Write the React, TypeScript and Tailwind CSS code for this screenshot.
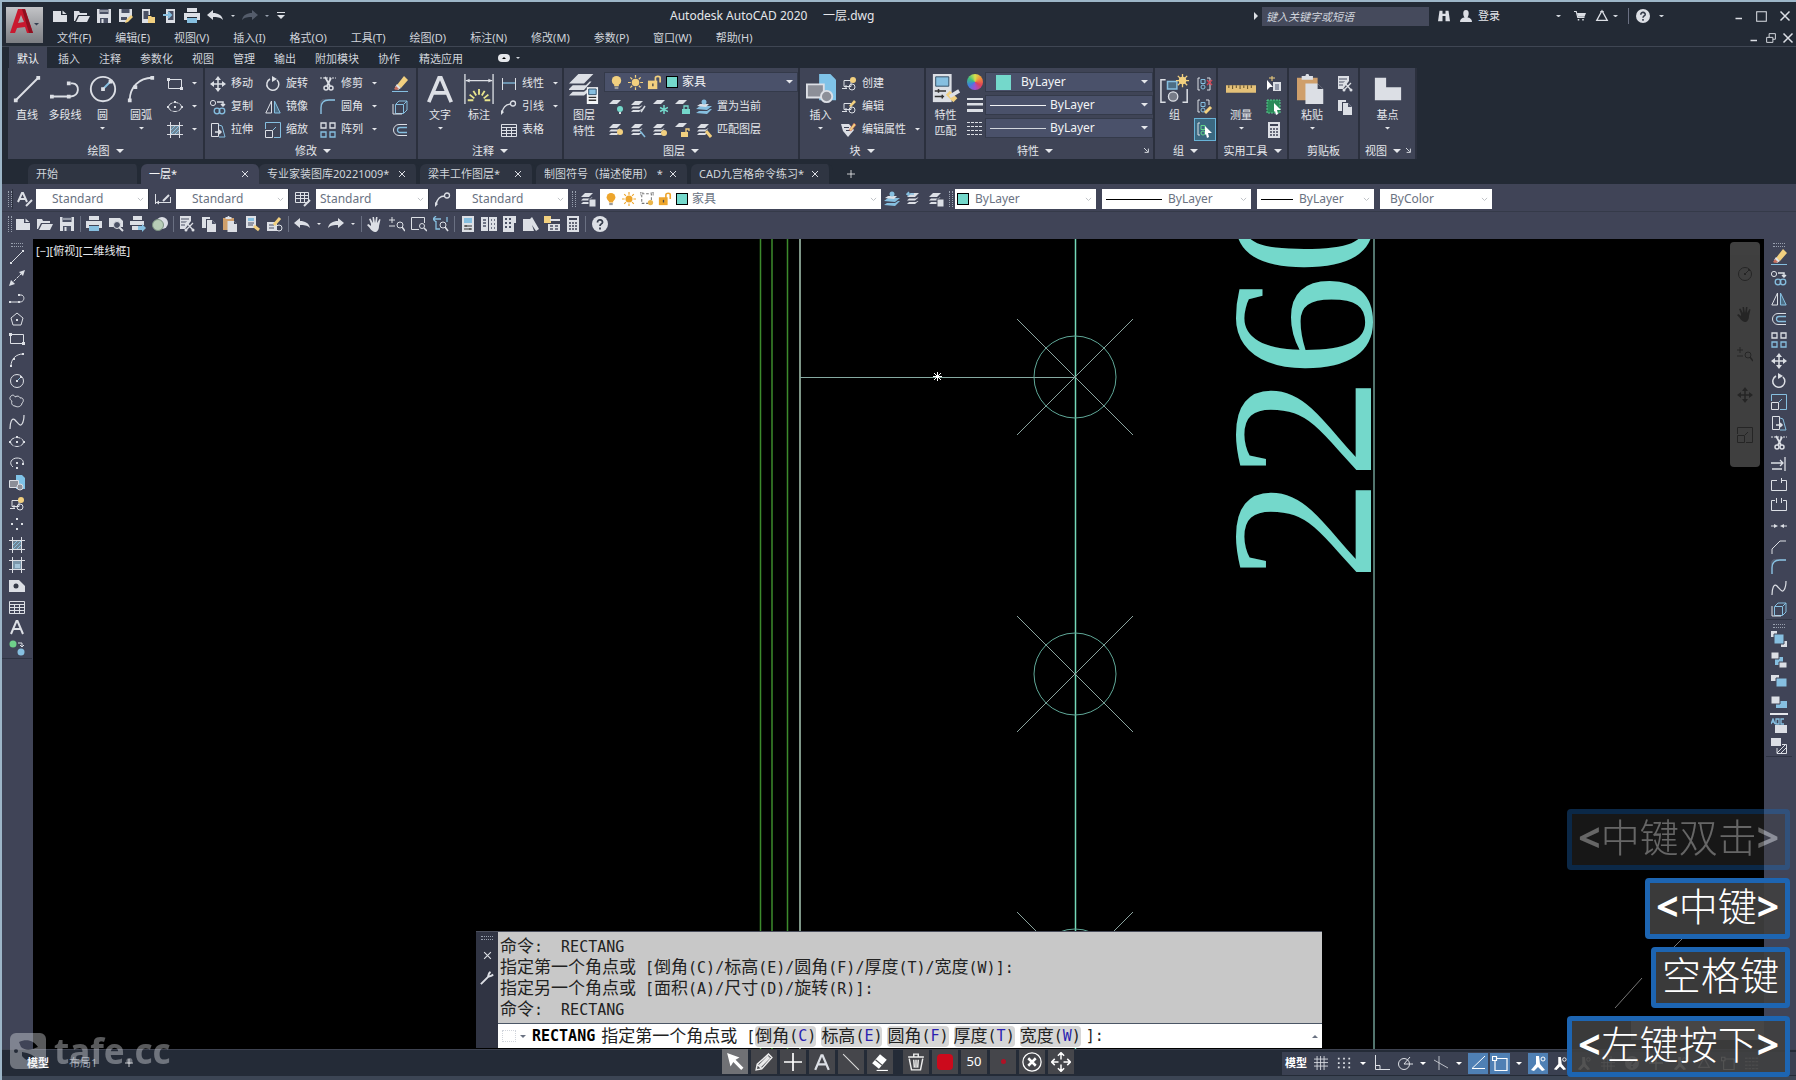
import React from 'react';

type IconProps = { name: string; className?: string };

const W = '#dcdfe5';
const B = '#86bfe0';
const Y = '#f2d07f';
const T = '#74d8cb';

const layers = (
  <g fill={W}>
    <path d="M1 6 5 2h8L9 6z" />
    <path d="M1 9.500 3 7.500h7l1.500-1h1L9 9.500z" />
    <path d="M1 13 3 11h7l1.500-1h1L9 13z" />
  </g>
);

const blocks = (
  <g fill="none" stroke={W}>
    <path d="M3 4.500h7v6H3zM1 12.500h5M5 13V9" />
    <circle cx="11" cy="11" r="3" />
  </g>
);

const glyphs: Record<string, React.ReactNode> = {
  new: <path fill={W} d="M1 3h8v4h6v7H1zM10.500 2.500 14.500 6h-4z" />,
  open: <path fill={W} d="M0 3h5l1 2h7v2H4l-3 6H0zM5 8h11l-3 6H2z" />,
  save: <><path fill={W} d="M1 1h14v14H1z" /><path fill="#4b5165" d="M3.500 1h9v5h-9zM4 10h8v5H4z" /><path fill={W} d="M4 2.500h8v1H4zM5.500 11h2v4h-2z" /></>,
  saveas: <><path fill={W} d="M1 1h13v7l-6 6H1z" /><path fill="#4b5165" d="M3.500 1h8v4h-8zM3 9h6v3H3z" /><path fill={Y} d="m8 12 5-5 2 2-5 5-3 1z" /></>,
  mobileopen: <><path fill={W} d="M2 1h8v6H8v8H2z" /><path fill="#4b5165" d="M3.500 3h5v8h-5z" /><path fill={Y} d="M8 8h3l1 1h3v6H8z" /></>,
  mobilesave: <><path fill={W} d="M4 1h9v14H4z" /><path fill="#4b5165" d="M6 3h5.500v9H6z" /><path stroke={B} strokeWidth="2" d="M1 7h7M6 4l3 3-3 3" fill="none" /></>,
  print: <><path fill={W} d="M3 0h10v4H3zM0 5h16v7h-3V9H3v3H0z" /><path fill={B} d="M3 10h10v5H3z" /></>,
  preview: <><path fill={W} d="M1 2h11l3 3v6H1z" /><circle cx="9" cy="9" r="3.500" fill="#4b5165" stroke={W} /><path stroke={W} strokeWidth="2" d="m11 11 4 4" /></>,
  publish: <><path fill={W} d="M3 0h9v4H3zM0 5h14v4H0zM2 10h6v4H2z" /><path fill={B} d="M8 10h4V8l4 4-4 4v-2H8z" /></>,
  globe: <><circle cx="10" cy="7" r="6" fill={W} /><circle cx="6" cy="9" r="5.500" fill="#b7cdb6" stroke="#7e9484" /></>,
  undo: <path fill={W} d="m0 7 6-5v3c5 0 9 2 10 7-3-3-6-3-10-3v3z" />,
  redo: <path fill={W} d="m16 7-6-5v3C5 5 1 7 0 12c3-3 6-3 10-3v3z" />,
  redodim: <path fill="#545c6b" d="m16 7-6-5v3C5 5 1 7 0 12c3-3 6-3 10-3v3z" />,
  line: <><path stroke={W} d="M2 14 14 2" /><path fill={W} d="M1 13h2v2H1zM13 1h2v2h-2z" /></>,
  xline: <><path stroke={W} d="M2 14 14 2" strokeDasharray="3 1" /><path fill={W} d="m0 16 2-6 4 4zM16 0l-2 6-4-4z" /></>,
  pline: <><path fill="none" stroke={W} d="M1 12h10c5 0 5-7 1-7h-1" /><path fill={W} d="M0 11h2v2H0zM9 11h2v2H9zM9 4h2v2H9z" /></>,
  circle: <><circle cx="8" cy="8" r="6.500" fill="none" stroke={W} /><path stroke={B} d="m8 8 4-4" /><path fill={W} d="M7 7h2v2H7zM11 3h2v2h-2z" /></>,
  arc: <><path fill="none" stroke={W} d="M2 14C2 7 7 2 14 2" /><path fill={W} d="M1 13h2v2H1zM13 1h2v2h-2zM4 6h2v2H4z" /></>,
  rect: <><path fill="none" stroke={W} d="M1.500 3.500h13v9h-13z" /><path fill={W} d="M0 2h3v3H0zM13 11h3v3h-3z" /></>,
  ellipse: <><ellipse cx="8" cy="8" rx="6.500" ry="4.500" fill="none" stroke={W} strokeDasharray="5 1" /><path fill={W} d="M7 7h2v2H7zM0 7h2v2H0zM14 7h2v2h-2zM7 2h2v2H7z" /></>,
  elarc: <><path fill="none" stroke={W} d="M4 12C-1 8 3 3 8 3s7 3 6 6" /><path fill={W} d="M7 7h2v2H7zM7 12h2v2H7zM13 8h2v2h-2z" /></>,
  hatch: <><path fill="#6f8494" d="M4 4h8v8H4z" /><path stroke={W} fill="none" d="M0 3.500h16M0 12.500h16M3.500 0v16M12.500 0v16" /><path stroke={B} d="m4 8 4-4M4 12l8-8M8 12l4-4" /></>,
  gradient: <><path fill="#7d98ab" d="M4 4h8v8H4z" /><path fill="#a4c4d8" d="M6 7h5v4H6z" /><path stroke={W} fill="none" d="M0 3.500h16M0 12.500h16M3.500 0v16M12.500 0v16" /></>,
  polygon: <><path fill="none" stroke={W} d="m8 2 6 5-2 7H4L2 7z" /><path fill={W} d="M7 8h2v2H7z" /></>,
  cloud: <path fill="none" stroke={W} d="M2 3c2-2 4 0 4 1 3-2 5 0 5 1 4-1 4 4 2 5 0 3-4 5-7 3-3 0-4-3-3-5-2-1-3-3-1-5z" />,
  spline: <path fill="none" stroke={W} strokeWidth="1.200" d="M1 15C1 8 3 3 6 6s5 7 7 4 2-6 2-9" />,
  point: <path fill={W} d="M7 2h2v2H7zM2 7h2v2H2zM12 7h2v2h-2zM7 12h2v2H7z" />,
  region: <><path fill={W} d="M0 2h10l6 6v6H0z" /><circle cx="7" cy="8" r="2.500" fill="#343a48" /></>,
  table: <path fill="none" stroke={W} d="M.5 2.500h15v12H.5zM0 5.500h16M0 8.500h16M0 11.500h16M5.500 5v9M10.500 5v9" />,
  letter: <path fill="none" stroke={W} strokeWidth="2" d="M2 15 7.500 2h1L14 15M4.500 10h7" />,
  swap: <><circle cx="4" cy="4" r="3.500" fill="#6fd08a" /><circle cx="12" cy="12" r="3.500" fill={B} /><path fill="none" stroke={W} d="M9 3h4v4M11 5l2 2 2-2" /></>,
  insert: <><path fill="#7fc3e8" d="M7 0h6l3 3v11H7z" /><path fill="#8c8f98" stroke={W} d="M.5 5.500h9v7h-9z" /><circle cx="11" cy="12" r="3" fill="#8c8f98" stroke={W} /></>,
  block: <>{blocks}<circle cx="12" cy="4" r="3" fill={Y} /></>,
  blockedit: <>{blocks}<path fill={Y} d="m8 7 5-6 2 2-5 5z" /></>,
  attr: <><path fill={W} d="M0 2h8l5 6-6 7-5-6z" /><path fill="#3e4355" d="M3 5h5v1H3zM5 8h4v1H5z" /><path fill={Y} stroke="#c8534a" strokeWidth=".5" d="m8 8 5-7 2 2-5 6z" /></>,
  move: <><path stroke={W} strokeWidth="1.500" d="M8 2v12M2 8h12" /><path fill={W} d="m8 0 3 4H5zM8 16l3-4H5zM0 8l4-3v6zM16 8l-4-3v6z" /></>,
  rotate: <><path fill="none" stroke={W} strokeWidth="1.500" d="M5 3a6 6 0 1 0 7 1" /><path fill={W} d="m7 0 5 3-5 3z" /></>,
  trim: <><path stroke={W} strokeDasharray="2 1" d="M0 2h16" /><path fill="none" stroke={W} strokeWidth="1.800" d="m5 1 5 9M11 2l-4 8" /><circle cx="6" cy="12" r="2" fill="none" stroke={W} strokeWidth="1.500" /><circle cx="11" cy="12" r="2" fill="none" stroke={W} strokeWidth="1.500" /></>,
  erase: <><path fill={Y} d="M5 9 12 0l4 4-7 8z" /><path fill="#e4e4e4" d="m3 11 2-3 4 4-3 2z" /><path fill="#c9705e" d="m2 13 2-3 3 3-3 1z" /><path stroke={B} d="M0 15.500h16" /></>,
  copy: <><g fill="none" stroke={B} strokeWidth="1.300"><circle cx="7" cy="12" r="2.800" /><circle cx="12" cy="12" r="2.800" /></g><circle cx="3" cy="4" r="2.600" fill="none" stroke={W} /><path fill="none" stroke={W} strokeWidth="1.500" d="M7 3h6v4M11 5l2 2 2-2" /></>,
  mirror: <><path fill="none" stroke={W} d="M6.500 2v12H.8z" /><path fill="#4c6d84" stroke={B} d="M9.500 2v12h5.700z" /></>,
  fillet: <><path fill="none" stroke="#6b7488" d="M1 15V3c0-1 1-2 2-2h12" /><path fill="none" stroke={B} strokeWidth="1.300" d="M1 15V9c0-5 3-8 8-8h6" /></>,
  chamfer: <path fill="none" stroke={W} d="M1 15v-5l8-8h6" />,
  explode: <><path fill="none" stroke={B} d="M3.500 5.500h8v9h-8zM4 5l3-3h8l-3 3M15 2v9l-3 3" /><path fill="none" stroke={W} d="M1 5v10h9" /></>,
  stretch: <><path fill="none" stroke={W} d="M1.500 1.500h7v13h-7z" /><path fill="none" stroke={B} d="m9 3 3 1 3 11H9" /><path stroke={W} strokeWidth="1.500" d="M5 10h6M9 8l2 2-2 2" fill="none" /></>,
  scale: <><path fill="none" stroke={W} d="M.5 8.500h7v7h-7z" /><path fill="none" stroke={B} d="M.5 7V.5h15v15H9M8 8l3-3" /></>,
  array: <g fill="none" strokeWidth="1.300"><path stroke={W} d="M1 1h5v5H1zM10 1h5v5h-5z" /><path stroke={B} d="M1 10h5v5H1zM10 10h5v5h-5z" /></g>,
  offset: <><path fill="none" stroke={W} d="M15 2.500H7a5.500 5.500 0 0 0 0 11h8" /><path fill="none" stroke={B} strokeWidth="1.300" d="M15 5.500H8a2.500 2.500 0 0 0 0 5h7" /></>,
  extend: <path fill="none" stroke={W} strokeWidth="1.300" d="M14 1v14M0 7h4M3 7h9M9 4l3 3-3 3M1 13h10" />,
  breakat: <path fill="none" stroke={W} d="M6 3.500H.5v10h15v-10H11M10.500 1v5" />,
  breakoff: <path fill="none" stroke={W} d="M4 3.500H.5v10h15v-10H12M5.500 1v5M10.500 1v5" />,
  join: <path fill={W} d="M0 7.500h3V6l4 2-4 2V8.500H0zM16 7.500h-3V6L9 8l4 2V8.500h3z" />,
  dim: <><path stroke={W} fill="none" d="M.5 1v14M15.500 1v14M1 4.500h14" /><path fill={W} d="m1 4.500 3-2v4zM15 4.500l-3-2v4z" /></>,
  linear: <><path stroke={W} d="M1.500 2v12M14.500 2v12" /><path stroke={B} strokeWidth="1.300" d="M2 7h12" /></>,
  dimbig: <><path stroke={W} fill="none" d="M.5 0v16M15.500 0v16M1 3.500h14" strokeWidth=".7" /><path fill={W} d="m1 3.500 2-1v2zM15 3.500l-2-1v2z" /><path stroke="#e8e48c" strokeWidth="1" d="M8 8v3M5 9l1.500 2.500M11 9 9.500 11.500M3 11l2.500 2M13 11l-2.500 2M2 14h3M14 14h-3" /></>,
  leader: <><path fill="none" stroke={W} strokeWidth="1.300" d="M1 14C2 7 5 5 10 5" /><circle cx="12" cy="4.500" r="2.500" fill="none" stroke={W} strokeWidth="1.300" /><path fill={W} d="m0 16 0-5 3 2z" /></>,
  layerprops: <><g fill={W}><path d="M0 5 5 0h8L8 5zM0 8l2-2h7l2-2h1L8 8.500H0zM0 11.500l2-2h6l3-2.500v2L8 11.500z" /></g><path fill="#f2f4f6" d="M9.500 7h6v9h-6z" /><path fill={B} stroke="#31506a" strokeWidth=".5" d="M10.500 8h4v3h-4z" /><path stroke="#333" strokeWidth=".7" d="M10.500 12.500h4M10.500 14h4" /></>,
  laybulb: <><path fill={W} d="M1 5 5 1h8L9 5z" /><circle cx="12" cy="10" r="3" fill={T} /><path fill={W} d="M11 13h2v2h-2z" /></>,
  laymake: <>{layers}<path stroke={W} strokeWidth="1.500" d="m15 7-4 6" /></>,
  layfreeze: <><path fill={W} d="M1 5 5 1h8L9 5z" /><path stroke={T} strokeWidth="1.500" d="M12 6v9M8 8.500l8 4M8 12.500l8-4" /></>,
  laylock: <><path fill={W} d="M1 5 5 1h8L9 5z" /><path fill={T} d="M8 10h8v5H8z" /><path fill="none" stroke={T} strokeWidth="1.300" d="M10 10V7h4v3" /></>,
  laycur: <><path fill={B} d="m0 10 4-3h12l-5 4zM0 14l3-2h8l3-2h2l-5 5z" /><path fill={W} d="m1 7 3-2h9l-3 3z" /><circle cx="8" cy="3" r="2.500" fill={B} /></>,
  laybulby: <>{layers}<circle cx="12" cy="10" r="3" fill={Y} /></>,
  laywalk: <>{layers}<path stroke={B} strokeWidth="1.500" d="m10 9 5 6" /></>,
  laysun: <>{layers}<circle cx="12" cy="11" r="3" fill={Y} /></>,
  layunlock: <><path fill={W} d="M1 5 5 1h8L9 5z" /><path fill={Y} d="M7 10h7v5H7z" /><path fill="none" stroke={Y} strokeWidth="1.300" d="M12 10V7h3v2" /></>,
  laymatch: <>{layers}<path stroke={Y} strokeWidth="3" d="m10 9 5 6" /></>,
  layprev: <>{layers}<path stroke={B} strokeWidth="1.500" fill="none" d="M8 3H1l2-2M1 3l2 2" /></>,
  laystate: <>{layers}<path fill={W} stroke="#404457" d="M9 8h7v8H9z" /></>,
  bulb: <><circle cx="8" cy="6" r="5" fill="currentColor" /><path fill="currentColor" d="M5.500 10h5v2h-5z" /><path fill="#9a9a9a" d="M6 12.500h4V15H6z" /></>,
  sun: <><circle cx="8" cy="8" r="4" fill="currentColor" /><path stroke="currentColor" strokeWidth="1.300" d="M8 0v3M8 13v3M0 8h3M13 8h3M2.500 2.500l2 2M11.500 11.500l2 2M13.500 2.500l-2 2M2.500 13.500l2-2" /></>,
  unlock: <><path fill="currentColor" d="M1 6h10v9H1z" /><path fill="none" stroke="currentColor" strokeWidth="1.800" d="M9 7V3c0-2 5-2 5 0v5" /><path fill="#4b4b4b" d="M5.500 9h1.500v3H5.500z" /></>,
  vpfreeze: <><path fill="none" stroke="#777" strokeWidth="1.200" strokeDasharray="3 2" d="M2 2h11v11H2z" /><path stroke="#777" d="M0 4V0h4M12 0h3v4" fill="none" /><circle cx="12" cy="12" r="3" fill="#eab54b" /></>,
  match: <><path fill={W} d="M1 0h10v15H1z" /><path fill={B} stroke="#2f4a60" strokeWidth=".5" d="M2.500 1.500h7v5h-7z" /><path stroke="#333" strokeWidth=".8" d="M2 9h6M2 12h5M4 8v2M6 11v2" /><path stroke={Y} strokeWidth="3" d="m9 10 4 4" /><path stroke={W} strokeWidth="2" d="m10 12 5-3" /></>,
  lineweight: <path fill={W} d="M0 1h16v2H0zM0 6h16v2.500H0zM0 12h16v3H0z" />,
  linetype: <path stroke={W} strokeDasharray="3 1" d="M0 2.500h16M0 6.500h16M0 10.500h16M0 14.500h16" />,
  group: <><path fill="none" stroke={W} d="M3 3H.5v12H3M12 15h2.500V8" strokeWidth=".8" /><path fill="#4c6d84" stroke={B} strokeWidth=".8" d="M4 4h5v4H4z" /><circle cx="7" cy="12" r="2.500" fill="#777c88" stroke={W} strokeWidth=".7" /><circle cx="12" cy="3.500" r="2" fill={Y} /><path stroke={Y} d="M12 0v7M8.500 3.500h7M9.500 1l5 5M14.500 1l-5 5" strokeWidth=".7" /></>,
  ungroup: <><path fill="none" stroke={W} d="M3 2H1v12h2M10 2h3v12h-3" /><path fill="none" stroke={B} d="M4 3.500h4v4H4z" /><circle cx="6" cy="11" r="2" fill="none" stroke={B} /><path stroke="#cf4455" strokeWidth="1.500" d="m10 4 5 5M15 4l-5 5" /></>,
  groupedit: <><path fill="none" stroke={W} d="M3 1H1v12h2M9 1h3v5" /><path fill="none" stroke={B} d="M4 3.500h4v4H4z" /><circle cx="6" cy="11" r="2" fill="none" stroke={B} /><path stroke={Y} strokeWidth="3" d="m8 14 6-6" /></>,
  groupsel: <><path fill="none" stroke={W} d="M3 1H1v12h2" /><path fill="none" stroke="#62d58a" d="M4 3.500h4v4H4z" /><circle cx="6" cy="11" r="2" fill="none" stroke="#62d58a" /><path fill="#fff" d="m8 4 7 7h-4l1 4-2 1-1-4-1 1z" /></>,
  ruler: <><path fill="#e4c178" d="M0 6h16v4H0z" /><path stroke="#6d5a32" strokeWidth=".6" d="M1.500 6v1.500M3.500 6v2M5.500 6v1.500M7.500 6v2M9.500 6v1.500M11.500 6v2M13.500 6v1.500" /></>,
  quick: <><path fill="#fff" d="m1 4 6 7H4l-3 3z" /><path fill={W} d="M7 6h8v9H7z" /><path stroke="#47506a" d="M9 9h4M9 11h4M9 13h4" /><path stroke={Y} d="M6 0v5M3 2h6" /></>,
  selsim: <><path fill="#2b8a59" stroke="#59c98d" strokeDasharray="2 1" d="M1 1h13v13H1z" /><path fill="#fff" d="m8 4 7 7h-4l1 4-2 1-1-4-1 1z" /></>,
  calc: <><path fill={W} d="M2 0h12v16H2z" /><path fill="#3e4355" d="M4 2h8v2H4z" /><path stroke="#3e4355" strokeWidth="1.500" strokeDasharray="2 1" d="M4 7h8M4 10h8M4 13h8" /></>,
  paste: <><path fill="#cf9f6b" d="M0 2h11v12H0z" /><path fill={W} d="M2.500 1h2c0-1.500 2-1.500 2 0h2v2h-6zM4.500 5H11l3 3v8H4.500z" /><path fill="#3e4355" d="M11 5v3h3z" /></>,
  cut: <><path fill={W} d="M1 0h11v5L6 13H1z" /><path stroke="#4b5165" d="M2 3h8M2 6h6M2 9h4" /><path stroke={W} strokeWidth="1.300" d="m7 6 7 8M14 7l-7 7" /><circle cx="7" cy="14" r="1.500" fill={W} /><circle cx="14" cy="14" r="1.500" fill={W} /></>,
  copyclip: <><path fill={W} d="M1 1h8v2H5v9H1z" /><path fill={W} d="M6 4h5l4 4v8H6z" /><path fill="#4b5165" d="M11 4v4h4z" /></>,
  base: <path fill={W} d="M1 2h6v5h8v7H1z" />,
  pan: <path fill={W} d="M4 8 2 3l1.500-.5L6 7l-.5-6H7l1 6 1-6h1.500L10 7l2.500-4 1 .5L12 10c0 4-2 6-4 6-3 0-5-4-8-7l1.500-1L4 10z" />,
  zoomrt: <><path stroke={W} d="M0 4h6M3 1v6M0 10h6" /><circle cx="11" cy="9" r="3" fill="none" stroke={W} /><path stroke={W} strokeWidth="1.500" d="m13 11 3 4" /></>,
  zoomwin: <><path fill="none" stroke={W} d="M8 13.500H.5v-12h13V7" /><circle cx="11" cy="10" r="2.500" fill="none" stroke={W} /><path stroke={W} strokeWidth="1.500" d="m13 12 3 3" /></>,
  zoomprev: <><path fill="none" stroke={B} d="M3 5v8h4M14 1v5M0 3h8M3 0 0 3l3 3" strokeWidth="1.300" /><circle cx="10" cy="9" r="3" fill="none" stroke={W} /><path stroke={W} strokeWidth="1.500" d="m12 11 3 4" /></>,
  props: <><path fill={W} d="M2 0h12v16H2z" /><path fill={B} d="M4 2h8v5H4z" /><path stroke="#333" d="M4 10h8M4 13h8M6 9v2M10 12v2" /></>,
  dcenter: <><path fill={W} d="M0 1h7v14H0zM8 1h8v14H8z" /><path stroke="#4b5165" d="M2 4h3M2 7h3M2 10h3M10 4h1M13 4h1M10 8h1M13 8h1M10 12h1M13 12h1" strokeWidth="1.500" /></>,
  palette: <><path fill={W} d="M1 0h13v7h-2v9H1z" /><path stroke="#4b5165" strokeWidth="2" strokeDasharray="2 2" d="M3 3h7M3 7h7M3 11h7" /></>,
  sheet: <path fill={W} d="M0 3h7l2-2 7 12-3 2-4-6 2 6H0z" />,
  markup: <><path fill={Y} d="M0 0h7v7H0z" /><path fill={W} d="M6 3h10v2H6zM4 8h12v7H4z" /><path stroke="#4b5165" d="M6 10h3M11 10h3M6 13h3M11 13h3" strokeWidth="1.500" /></>,
  blocked: <><path fill={W} d="M0 6h10v9H0z" /><path stroke="#4b5165" d="M2 9h5M2 12h5" /><path stroke={Y} strokeWidth="3" d="m7 9 6-7" /><circle cx="12" cy="12" r="3" fill="none" stroke={W} /></>,
  brush: <><path fill={W} d="M1 0h10v12H1z" /><path fill={B} d="M3 2h6v3H3z" /><path stroke="#4b5165" d="M3 7h6M3 9h5" /><path stroke={Y} strokeWidth="3" d="m9 10 5 4" /></>,
  help: <><circle cx="8" cy="8" r="8" fill={W} /><path fill="none" stroke="#343b4a" strokeWidth="1.800" d="M5.500 6.500c0-4 5.500-3 5 0-.5 1.500-2.500 1.500-2.500 3.500M8 11.500v2" /></>,
  astyle: <><path fill="none" stroke={W} strokeWidth="2" d="M1 11 5 2h1l4 9M3 8h5" /><path stroke={W} strokeWidth="2" d="m9 15 6-6" /></>,
  dstyle: <><path stroke={W} d="M.5 3v10M15.500 6v6M1 11.500h14" fill="none" /><path fill={W} d="m1 11.500 3-2v4z" /><path stroke={W} strokeWidth="2" d="m8 10 6-6" /></>,
  tstyle: <><path fill="none" stroke={W} d="M.5 1.500h13v10H.5zM0 4.500h14M0 7.500h14M5.500 2v9M9.500 2v9" /><path stroke={W} strokeWidth="2" d="m9 15 6-6" /></>,
  draw1: <><path fill={W} d="M0 0h6v6H0zM10 10h6v6h-6z" /><path fill={B} stroke="#404457" d="M3 3h10v10H3z" /></>,
  draw2: <><path fill={B} d="M4 5h8v8H4z" /><path fill={W} stroke="#404457" d="M0 0h8v7H0zM8 10h8v6H8z" /></>,
  draw3: <><path fill={W} d="M0 2h8v6H0z" /><path fill={B} stroke="#404457" d="M5 5h11v9H5z" /></>,
  draw4: <><path fill={B} d="M5 7h11v7H5z" /><path fill={W} stroke="#404457" d="M0 2h9v8H0z" /></>,
  draw5: <><path stroke={B} strokeWidth="1.300" fill="none" d="m0 6 2-5 2 5M1 4h2M5 1v5h3V1zM13 1h-3v5h3" /><path fill={W} d="M4 7h12v8H4z" /></>,
  draw6: <><path fill={W} d="M0 0h10v8H0z" /><path fill="none" stroke={W} d="M6 10v5.500h9.500v-9H11M6 15l9-9M10 15l5-5" /></>,
  cart: <><path fill="none" stroke={W} strokeWidth="1.500" d="M0 2h3l2 8h9" /><path fill={W} d="M4 4h12l-2 5H5zM5 12h2v2H5zM11 12h2v2h-2z" /></>,
  tri: <path fill="none" stroke={W} strokeWidth="1.500" d="M8 2 2 13h12zM6 3h4" />,
  user: <path fill={W} d="M8 0c5 0 4 7 2 10 3 0 6 2 6 6H0c0-4 3-6 6-6C4 7 3 0 8 0z" />,
  bino: <path fill={W} d="M2 1h4v4h4V1h4l2 14h-6V8H6v7H0z" />,
  grid: <path stroke={W} d="M0 3.500h16M0 7.500h16M0 11.500h16M3.500 0v16M7.500 0v16M11.500 0v16" />,
  snap: <path stroke={W} strokeWidth="2" strokeDasharray="2 4" d="M1 3h14M1 8h14M1 13h14" />,
  ortho: <path fill="none" stroke={W} d="M1.500 0v14.500H16M2 10.500h4v4" />,
  polar: <><circle cx="7" cy="9" r="5.500" fill="none" stroke={W} /><path stroke={W} d="M7 9h9M7 9l6-7" /></>,
  iso: <path stroke={W} d="M6 1v14M1 5l14 8" fill="none" opacity=".8" />,
  track: <path fill="none" stroke="#fff" d="M15 1 2 13.500h13" />,
  osnap: <path fill="none" stroke="#fff" strokeWidth="1.200" d="M4 3.500h11v12H3V5M.5 1.500h4v4h-4z" />,
  anno: <><path fill="#fff" d="M6 1h3l1 8 5 6-3 1-4-4-4 4-3-1 5-6z" /><circle cx="13" cy="4" r="2" fill="none" stroke="#fff" /></>,
  cursor: <path fill="#fff" d="m1 0 11 4-3.500 2 7 7-2 2-7-7L4 12z" />,
  pencil: <path fill="none" stroke="#eee" strokeWidth="1.300" d="m1 15 1-5L12 1l3 3-9 10zM4 11l8-8M5 12l8-8M2 10l4 4" />,
  plus: <path stroke="#fff" strokeWidth="1.500" d="M8 0v16M0 8h16" />,
  diag: <path stroke="#ddd" d="m1 1 14 14" />,
  rubber: <><path fill="#fff" d="m8 1 6 5-7 8-6-5z" /><path stroke="#fff" d="M5 15.500h10" /><path stroke="#4a4a4c" d="m4 6 6 5" /></>,
  trash: <path fill="none" stroke="#eee" strokeWidth="1.300" d="M1 3.500h14M6 3V1h4v2M2 5l2 10h8l2-10M6 6l.5 7M10 6l-.5 7M8 6v7" />,
  closeo: <><circle cx="8" cy="8" r="7.300" fill="none" stroke="#fff" /><path stroke="#fff" strokeWidth="2" d="m5 5 6 6M11 5l-6 6" /></>,
  mover: <path fill="none" stroke="#fff" strokeWidth="1.200" d="M8 6V1M5.500 3 8 .5 10.500 3M8 10v5M5.500 13 8 15.500l2.500-2.500M6 8H1M3 5.500.5 8 3 10.500M10 8h5M13 5.500 15.500 8 13 10.500" />,
  wrench: <path fill="none" stroke={W} strokeWidth="2.200" d="m1 15 8-8M15 4c-2 2-4 2-6 3 1-2 0-4 3-6" />,
  close: <path stroke={W} strokeWidth="2" d="m2 2 12 12M14 2 2 14" />,
  max: <path fill="none" stroke={W} strokeWidth="1.500" d="M1 1h14v14H1z" />,
  min: <path stroke={W} strokeWidth="3" d="M1 13h13" />,
  restore: <path fill="none" stroke={W} strokeWidth="1.500" d="M1 7h10v8H1zM5 7V1h10v9h-4" />,
};

const Icon = ({ name, className = 'size-4' }: IconProps) => (
  <svg viewBox="0 0 16 16" className={`shrink-0 ${className}`} aria-hidden="true">
    {glyphs[name]}
  </svg>
);

const Caret = ({ className = 'w-[5px] text-gray-200' }: { className?: string }) => (
  <svg viewBox="0 0 8 4" className={`shrink-0 ${className}`} aria-hidden="true">
    <path fill="currentColor" d="M0 0h8L4 4z" />
  </svg>
);

const IconButton = ({ name, className = 'w-[22px] h-5', icon = 'size-4' }: { name: string; className?: string; icon?: string }) => (
  <button aria-label={name} className={`flex shrink-0 items-center justify-center ${className}`}>
    <Icon name={name} className={icon} />
  </button>
);

const Panel = ({ title, className, corner, plain, children }: { title: string; className: string; corner?: boolean; plain?: boolean; children: React.ReactNode }) => (
  <section className={`flex h-[91px] shrink-0 flex-col border-r-2 border-[#2b303d] bg-[#3f4456] ${className}`}>
    <div className="flex h-[75px] pt-1">{children}</div>
    <div className="flex h-4 items-center pb-px">
      <h2 className="flex flex-1 items-center justify-center gap-[6px] text-[11px] leading-4 text-gray-200">
        {title}
        {!plain && <Caret className="w-2" />}
      </h2>
      {corner && (
        <svg viewBox="0 0 8 8" className="mr-1 size-[5px]" aria-hidden="true">
          <path fill="none" stroke={W} strokeWidth="1.500" d="m0 0 6 6M7 1v6H1" />
        </svg>
      )}
    </div>
  </section>
);

const BigTool = ({ name, label, className, caret, icon = 'size-[30px]' }: { name: string; label: string[]; className: string; caret?: boolean; icon?: string }) => (
  <button className={`flex shrink-0 flex-col items-center justify-start pt-[2px] text-[11px] leading-4 text-gray-200 ${className}`}>
    <Icon name={name} className={icon} />
    <span className="pt-[3px]">{label.map((line) => <span key={line} className="block whitespace-nowrap">{line}</span>)}</span>
    {caret && <Caret className="mt-1 w-[5px]" />}
  </button>
);

const SmallTool = ({ name, label, caret }: { name: string; label?: string; caret?: boolean }) => (
  <button aria-label={label ?? name} className="flex h-[23px] items-center gap-[5px] whitespace-nowrap text-[11px] text-gray-200">
    <Icon name={name} />
    {label}
    {caret && <Caret className="ml-1 w-[5px]" />}
  </button>
);

const Column = ({ className, children }: { className: string; children: React.ReactNode }) => (
  <div className={`flex shrink-0 flex-col ${className}`}>{children}</div>
);

const RibbonCombo = ({ label, value, children }: { label: string; value: string; children: React.ReactNode }) => (
  <label className="flex h-5 w-full items-center gap-1 border border-[#343a4a] bg-[#4a516a] px-1">
    {children}
    <select aria-label={label} className="min-w-0 flex-1 appearance-none bg-transparent text-[12px] leading-4 text-gray-100">
      <option>{value}</option>
    </select>
    <Caret className="w-[7px] text-gray-200" />
  </label>
);

const BarCombo = ({ label, value, className, children }: { label: string; value: string; className: string; children?: React.ReactNode }) => (
  <label className={`flex h-5 shrink-0 items-center gap-1 bg-white pr-1 ${className}`}>
    {children}
    <select aria-label={label} className="min-w-0 flex-1 appearance-none bg-transparent text-[12px] leading-4 text-gray-500">
      <option>{value}</option>
    </select>
    <svg viewBox="0 0 8 5" className="w-[7px]" aria-hidden="true"><path fill="none" stroke="#b8bcc0" d="m1 1 3 3 3-3" /></svg>
  </label>
);

const Grip = () => <span className="h-4 w-1 shrink-0 border-x border-dotted border-gray-400" />;
const HGrip = () => <span className="mx-auto block h-1 w-3 shrink-0 border-y border-dotted border-gray-400" />;
const Divider = () => <span className="mx-[2px] h-4 w-px shrink-0 bg-[#6a7082]" />;

const menus = ['文件(F)', '编辑(E)', '视图(V)', '插入(I)', '格式(O)', '工具(T)', '绘图(D)', '标注(N)', '修改(M)', '参数(P)', '窗口(W)', '帮助(H)'];
const ribbonTabs = ['插入', '注释', '参数化', '视图', '管理', '输出', '附加模块', '协作', '精选应用'];
const files = [
  { name: '开始', width: 'w-[113px]', start: true },
  { name: '一层*', width: 'w-[118px]', active: true },
  { name: '专业家装图库20221009*', width: 'w-[161px]' },
  { name: '梁丰工作图层*', width: 'w-[116px]' },
  { name: '制图符号（描述使用） *', width: 'w-[155px]' },
  { name: 'CAD九宫格命令练习*', width: 'w-[142px]' },
];
const drawTools = ['line', 'xline', 'pline', 'polygon', 'rect', 'arc', 'circle', 'cloud', 'spline', 'ellipse', 'elarc', 'insert', 'block', 'point', 'hatch', 'gradient', 'region', 'table', 'letter', 'swap'];
const modifyTools = ['erase', 'copy', 'mirror', 'offset', 'array', 'move', 'rotate', 'scale', 'stretch', 'trim', 'extend', 'breakat', 'breakoff', 'join', 'chamfer', 'fillet', 'spline', 'explode'];

const TitleBar = () => (
  <header className="flex h-[45px] shrink-0 border-b border-[#3f4653] pl-1">
    <button aria-label="应用程序菜单" className="mt-[5px] flex h-9 w-[37px] shrink-0 items-start bg-linear-to-b from-[#c3c4c7] to-[#7c7e83]">
      <svg viewBox="0 0 24 26" className="ml-1 mt-px h-[26px] w-6" aria-hidden="true">
        <path fill="#c9192f" d="M8 1h7l8 24h-6l-2-6-8 1-2 5H0zM11 7 8 15l6-1z" />
        <path fill="#8f1020" d="m15 1 8 24h-4L12 1z" />
      </svg>
      <Caret className="mt-4 w-[5px] text-gray-700" />
    </button>
    <div className="flex min-w-0 flex-1 flex-col">
      <div className="flex h-[25px] items-center pt-[3px]">
        <div className="flex flex-1 items-center pl-[6px]">
          {['new', 'open', 'save', 'saveas', 'mobileopen', 'mobilesave', 'print'].map((n) => <IconButton key={n} name={n} />)}
          <IconButton name="undo" className="h-5 w-6" />
          <Caret className="mx-1 w-1 text-gray-300" />
          <IconButton name="redodim" />
          <Caret className="mx-1 w-1 text-gray-400" />
          <svg viewBox="0 0 8 8" className="ml-1 size-2" aria-hidden="true"><path fill={W} d="M0 0h8v1H0zM0 3h8L4 7z" /></svg>
        </div>
        <h1 className="w-[560px] whitespace-pre text-[12px] leading-5 text-gray-200">{'Autodesk AutoCAD 2020     一层.dwg'}</h1>
        <div className="flex w-[566px] items-center">
          <svg viewBox="0 0 4 8" className="ml-6 mr-1 h-2 w-1 shrink-0" aria-hidden="true"><path fill={W} d="m0 0 4 4-4 4z" /></svg>
          <input aria-label="搜索" placeholder="键入关键字或短语" className="h-[19px] w-[167px] bg-[#454a5c] px-1 text-[11px] italic placeholder:text-gray-300" />
          <IconButton name="bino" className="ml-1 h-5 w-[22px]" icon="size-3" />
          <IconButton name="user" icon="size-3" />
          <button className="ml-px whitespace-nowrap text-[11px] text-gray-200">登录</button>
          <Caret className="ml-[56px] mr-2 w-[5px] text-gray-300" />
          <IconButton name="cart" icon="size-3" />
          <IconButton name="tri" icon="size-[14px]" />
          <Caret className="mr-2 w-[5px] text-gray-300" />
          <Divider />
          <IconButton name="help" className="h-5 w-6" icon="size-[14px]" />
          <Caret className="ml-1 w-[5px] text-gray-300" />
          <div className="ml-auto flex">
            <IconButton name="min" className="h-5 w-[23px]" icon="size-2" />
            <IconButton name="max" className="h-5 w-[23px]" icon="size-[11px]" />
            <IconButton name="close" className="h-5 w-[23px]" icon="size-3" />
          </div>
        </div>
      </div>
      <nav className="flex h-[19px] items-center pl-[14px] pt-[3px]">
        <div className="flex flex-1 gap-6 text-[11px] leading-4 text-gray-300">
          {menus.map((m) => <button key={m} className="whitespace-nowrap">{m}</button>)}
        </div>
        <div className="flex">
          <IconButton name="min" className="h-4 w-[17px]" icon="size-2" />
          <IconButton name="restore" className="h-4 w-[17px]" icon="size-[10px]" />
          <IconButton name="close" className="h-4 w-[17px]" icon="size-3" />
        </div>
      </nav>
    </div>
  </header>
);

const Ribbon = () => (
  <>
    <nav className="flex h-[21px] shrink-0 items-center gap-[19px] pl-[7px] text-[11px] text-gray-300">
      <button className="-mr-2 h-full bg-[#3f4456] px-2 pt-[3px] text-gray-100">默认</button>
      {ribbonTabs.map((t) => <button key={t} className="pt-[3px]">{t}</button>)}
      <button aria-label="最小化功能区" className="ml-4 flex items-center gap-[6px]">
        <span className="flex h-2 w-3 items-center justify-center rounded-sm bg-gray-200"><svg viewBox="0 0 8 4" className="w-1"><path d="M4 0l4 4H0z" /></svg></span>
        <Caret className="w-1" />
      </button>
    </nav>
    <div className="flex shrink-0 pl-[6px]">
      <Panel title="绘图" className="w-[197px]">
        <BigTool name="line" label={['直线']} className="w-[38px]" />
        <BigTool name="pline" label={['多段线']} className="w-[38px]" />
        <BigTool name="circle" label={['圆']} className="w-[37px]" caret />
        <BigTool name="arc" label={['圆弧']} className="w-10" caret />
        <Column className="pl-[6px]">
          <SmallTool name="rect" caret />
          <SmallTool name="ellipse" caret />
          <SmallTool name="hatch" caret />
        </Column>
      </Panel>
      <Panel title="修改" className="w-[213px] pl-[5px]">
        <Column className="w-[55px]">
          <SmallTool name="move" label="移动" />
          <SmallTool name="copy" label="复制" />
          <SmallTool name="stretch" label="拉伸" />
        </Column>
        <Column className="w-[55px]">
          <SmallTool name="rotate" label="旋转" />
          <SmallTool name="mirror" label="镜像" />
          <SmallTool name="scale" label="缩放" />
        </Column>
        <Column className="w-[72px]">
          <SmallTool name="trim" label="修剪" caret />
          <SmallTool name="fillet" label="圆角" caret />
          <SmallTool name="array" label="阵列" caret />
        </Column>
        <Column className="">
          <SmallTool name="erase" />
          <SmallTool name="explode" />
          <SmallTool name="offset" />
        </Column>
      </Panel>
      <Panel title="注释" className="w-[146px]">
        <BigTool name="letter" label={['文字']} className="w-11" caret />
        <BigTool name="dimbig" label={['标注']} className="w-[34px]" />
        <Column className="pl-[5px]">
          <SmallTool name="linear" label="线性" caret />
          <SmallTool name="leader" label="引线" caret />
          <SmallTool name="table" label="表格" />
        </Column>
      </Panel>
      <Panel title="图层" className="w-[236px]">
        <BigTool name="layerprops" label={['图层', '特性']} className="w-10" />
        <Column className="w-[194px]">
          <RibbonCombo label="图层" value="家具">
            <Icon name="bulb" className="size-[15px] text-[#f2d07f]" />
            <Icon name="sun" className="size-[15px] text-[#f2d07f]" />
            <Icon name="unlock" className="size-[15px] text-[#f2d07f]" />
            <span className="size-3 border border-black bg-[#74d8cb]" />
          </RibbonCombo>
          <div className="mt-[3px] flex h-[23px] items-center pl-[1px]">
            {['laybulb', 'laymake', 'layfreeze', 'laylock'].map((n) => <IconButton key={n} name={n} />)}
            <span className="pl-[3px]"><SmallTool name="laycur" label="置为当前" /></span>
          </div>
          <div className="flex h-[23px] items-center pl-[1px]">
            {['laybulby', 'laywalk', 'laysun', 'layunlock'].map((n) => <IconButton key={n} name={n} />)}
            <span className="pl-[3px]"><SmallTool name="laymatch" label="匹配图层" /></span>
          </div>
        </Column>
      </Panel>
      <Panel title="块" className="w-[126px]">
        <BigTool name="insert" label={['插入']} className="w-[41px]" caret />
        <Column className="">
          <SmallTool name="block" label="创建" />
          <SmallTool name="blockedit" label="编辑" />
          <SmallTool name="attr" label="编辑属性" caret />
        </Column>
      </Panel>
      <Panel title="特性" className="w-[229px]" corner>
        <BigTool name="match" label={['特性', '匹配']} className="w-[39px]" />
        <Column className="w-5 items-center gap-[7px] pt-[2px]">
          <span className="size-4 rounded-full bg-[conic-gradient(#d9e04a,#f08b3c,#e0405a,#a04fd0,#3f7fe0,#3fc080,#d9e04a)]" />
          <Icon name="lineweight" />
          <Icon name="linetype" />
        </Column>
        <Column className="w-[168px] gap-[3px]">
          <RibbonCombo label="颜色" value="ByLayer"><span className="ml-[6px] mr-[6px] size-[15px] bg-[#74d8cb]" /></RibbonCombo>
          <RibbonCombo label="线宽" value="ByLayer"><span className="h-px w-[56px] bg-gray-100" /></RibbonCombo>
          <RibbonCombo label="线型" value="ByLayer"><span className="h-px w-[56px] bg-gray-300" /></RibbonCombo>
        </Column>
      </Panel>
      <Panel title="组" className="w-[63px]">
        <BigTool name="group" label={['组']} className="w-[39px]" />
        <Column className="">
          <IconButton name="ungroup" className="h-[23px] w-[22px]" />
          <IconButton name="groupedit" className="h-[23px] w-[22px]" />
          <IconButton name="groupsel" className="h-[23px] w-[22px] border border-[#68b4d8] bg-[#3b6880]" />
        </Column>
      </Panel>
      <Panel title="实用工具" className="w-[71px]">
        <BigTool name="ruler" label={['测量']} className="w-[46px]" caret />
        <Column className="">
          <IconButton name="quick" className="h-[23px] w-5" />
          <IconButton name="selsim" className="h-[23px] w-5" />
          <IconButton name="calc" className="h-[23px] w-5" />
        </Column>
      </Panel>
      <Panel title="剪贴板" className="w-[71px]" plain>
        <BigTool name="paste" label={['粘贴']} className="w-[46px]" caret />
        <Column className="">
          <IconButton name="cut" className="h-[23px] w-5" />
          <IconButton name="copyclip" className="h-[23px] w-5" />
        </Column>
      </Panel>
      <Panel title="视图" className="w-[57px]" corner>
        <BigTool name="base" label={['基点']} className="w-full" caret />
      </Panel>
    </div>
  </>
);

const FileTabs = () => (
  <div className="flex h-[25px] shrink-0 items-end pl-[26px] text-[11px] text-gray-300">
    {files.map((f) => (
      <div
        key={f.name}
        className={`flex h-5 shrink-0 items-center justify-between rounded-t-md pl-2 pr-2 ${f.width} ${f.active ? 'bg-[#404457] text-gray-100' : 'border-r-4 border-[#232a35] bg-[#2f3542]'}`}
      >
        <button className="whitespace-nowrap">{f.name}</button>
        {!f.start && <IconButton name="close" className="size-3" icon="size-2" />}
      </div>
    ))}
    <button aria-label="新图形" className="ml-2 flex size-5 items-center justify-center"><Icon name="plus" className="size-2" /></button>
  </div>
);

const StyleBar = () => (
  <div className="flex h-[27px] shrink-0 items-center bg-[#404457] pl-[6px] pt-[3px]">
    <Grip />
    {[
      ['astyle', '文字样式', 'pl-4', 'w-6'],
      ['dstyle', '标注样式', 'pl-4', 'w-7'],
      ['tstyle', '表格样式', 'pl-1', 'w-7'],
      ['leader', '引线样式', 'pl-4', 'w-7'],
    ].map(([icon, label, pad, slot]) => (
      <React.Fragment key={label}>
        <IconButton name={icon} className={`h-5 border-l border-[#2d3240] ${slot}`} />
        <BarCombo label={label} value="Standard" className={`w-28 ${pad}`} />
      </React.Fragment>
    ))}
    <span className="flex pl-1"><Grip /></span>
    <IconButton name="laystate" className="h-5 w-6" />
    <BarCombo label="图层" value="家具" className="w-[281px] pl-1">
      <Icon name="bulb" className="size-[14px] text-[#eda52c]" />
      <Icon name="sun" className="size-[14px] text-[#eda52c]" />
      <Icon name="vpfreeze" className="size-[14px]" />
      <Icon name="unlock" className="size-[14px] text-[#eda52c]" />
      <span className="size-3 border border-black bg-[#74d8cb]" />
    </BarCombo>
    <IconButton name="laycur" />
    <IconButton name="layprev" />
    <IconButton name="laystate" />
    <span className="flex pl-[2px] pr-[2px]"><Grip /></span>
    <BarCombo label="颜色" value="ByLayer" className="w-[141px] pl-[2px]"><span className="mr-[2px] size-3 border border-black bg-[#74d8cb]" /></BarCombo>
    <BarCombo label="线型" value="ByLayer" className="ml-[6px] w-[149px] pl-1"><span className="mr-[2px] h-px w-[56px] bg-black" /></BarCombo>
    <BarCombo label="线宽" value="ByLayer" className="ml-[6px] w-[117px] pl-1"><span className="mr-[2px] h-px w-8 bg-black" /></BarCombo>
    <BarCombo label="打印样式" value="ByColor" className="ml-[6px] w-28 pl-[10px]" />
  </div>
);

const StandardBar = () => (
  <div className="flex h-7 shrink-0 items-center border-t border-[#353a49] bg-[#404457] pb-[3px] pl-[6px]">
    <Grip />
    {['new', 'open', 'save'].map((n) => <IconButton key={n} name={n} />)}
    <Divider />
    {['print', 'preview', 'publish', 'globe'].map((n) => <IconButton key={n} name={n} />)}
    <Divider />
    {['cut', 'copyclip', 'paste', 'brush', 'blocked'].map((n) => <IconButton key={n} name={n} />)}
    <Divider />
    <IconButton name="undo" />
    <Caret className="mx-1 w-1 text-gray-200" />
    <IconButton name="redo" />
    <Caret className="mx-1 w-1 text-gray-200" />
    <Divider />
    {['pan', 'zoomrt', 'zoomwin', 'zoomprev'].map((n) => <IconButton key={n} name={n} />)}
    <Divider />
    {['props', 'dcenter', 'palette', 'sheet', 'markup', 'calc'].map((n) => <IconButton key={n} name={n} className="h-5 w-[21px]" />)}
    <Divider />
    <IconButton name="help" className="h-5 w-6" />
  </div>
);

const Fixture = ({ y }: { y: number }) => (
  <g fill="none" stroke="#8aa39e">
    <circle cx="1042" cy={y} r="41" stroke="#5fa797" />
    <path d={`M984 ${y - 58}l116 116M1100 ${y - 58}L984 ${y + 58}`} />
  </g>
);

// Latin runs sit one step smaller than the Chinese ones, as in the console font
const Mono = ({ text }: { text: string }) => (
  <>
    {text.split(/([\x20-\x7e]+)/).map((part, i) =>
      i % 2 ? <span key={i} className="whitespace-pre font-['DejaVu_Sans_Mono',monospace] text-[15px]">{part}</span> : part,
    )}
  </>
);

const history = [
  '命令:  RECTANG',
  '指定第一个角点或 [倒角(C)/标高(E)/圆角(F)/厚度(T)/宽度(W)]:',
  '指定另一个角点或 [面积(A)/尺寸(D)/旋转(R)]:',
  '命令:  RECTANG',
];

const CommandLine = () => (
  <div className="absolute bottom-px left-[443px] flex w-[846px] border-t border-[#4a4e5c] text-[17px] text-[#222]">
    <div className="flex w-[22px] shrink-0 flex-col items-center gap-[9px] bg-[#303443] pt-1">
      <HGrip />
      <IconButton name="close" className="size-3" icon="size-[9px]" />
      <IconButton name="wrench" className="size-4" icon="size-[14px]" />
    </div>
    <div className="min-w-0 flex-1">
      <div className="bg-[#c8c8c8] px-[2px] pb-[3px] pt-1">
        {history.map((line, i) => <p key={i} className="flex h-[21px] items-center whitespace-pre leading-[21px]"><span><Mono text={line} /></span></p>)}
      </div>
      <div className="flex h-[25px] items-center border-t border-gray-600 bg-white px-1">
        <span className="h-3 w-[14px] border border-dotted border-gray-300" />
        <Caret className="ml-1 mr-[6px] w-[6px] text-gray-500" />
        <b className="font-['DejaVu_Sans_Mono',monospace] text-[15px] text-black">RECTANG</b>
        <span className="ml-[6px]"><Mono text="指定第一个角点或 [" /></span>
        {[['倒角', 'C'], ['标高', 'E'], ['圆角', 'F'], ['厚度', 'T'], ['宽度', 'W']].map(([label, key]) => (
          <button key={key} className="mr-[5px] flex h-[21px] items-center rounded-sm bg-[#d6d6d6]">
            {label}
            <span className="font-['DejaVu_Sans_Mono',monospace] text-[15px]">(<span className="text-[#2a1fb0]">{key}</span>)</span>
          </button>
        ))}
        <Mono text="]:" />
        <Caret className="ml-auto w-[6px] rotate-180 text-gray-500" />
      </div>
    </div>
  </div>
);

const Canvas = () => (
  <main className="relative min-w-0 flex-1 overflow-hidden bg-black">
    <svg className="absolute inset-0 h-full w-full" aria-label="图形">
      <path stroke="#3c8a2c" strokeWidth="1.500" d="M727.500 0v900M739 0v900M754.500 0v900" />
      <path stroke="#a9c9b4" strokeWidth="1.500" d="M767 0v900" />
      <path stroke="#74d8b8" strokeWidth="1.500" d="M1042.500 0v900" />
      <path stroke="#6f9c93" strokeWidth="1.500" d="M1341 0v900" />
      <path stroke="#86aaa2" d="M767 138.500h275" />
      <Fixture y={138} />
      <Fixture y={435} />
      <Fixture y={731} />
      <path stroke="#fff" d="M904.500 133v9M900 137.500h9M901 134l7 7M908 134l-7 7" />
      <path stroke="#777" d="m1582 769 27-30M1641 708l8-8" />
      <path fill="#807878" d="M1598 781h137v20h-137z" />
      <text transform="translate(1338 342) rotate(-90)" fill="#74d8cb" fontSize="204" fontFamily="'Liberation Serif', serif">2260</text>
    </svg>
    <p className="relative pl-[3px] pt-1 text-[11px] leading-4 text-gray-200">[−][俯视][二维线框]</p>
    <aside className="absolute right-1 top-[3px] flex h-[225px] w-[30px] flex-col items-center justify-around rounded bg-[#434343] py-3 opacity-95">
      {['circle', 'pan', 'zoomrt', 'move', 'scale'].map((n) => <IconButton key={n} name={n} className="size-5 opacity-40 brightness-0" />)}
    </aside>
    <CommandLine />
  </main>
);

const StatusBar = () => (
  <footer className="relative flex h-[27px] shrink-0 items-center border-t border-[#3d4250] bg-[#242b37] text-[11px]">
    <nav className="flex gap-5 pl-[25px] text-gray-400">
      <button className="font-bold text-white">模型</button>
      <button>布局1</button>
      <button aria-label="新建布局" className="pl-2"><Icon name="plus" className="size-2" /></button>
    </nav>
    <div className="absolute -top-px left-[720px] flex gap-[3px]">
      <IconButton name="cursor" className="h-[25px] w-[26px] bg-[#707175]" icon="size-[18px]" />
      {['pencil', 'plus', 'letter', 'diag', 'rubber'].map((n) => <IconButton key={n} name={n} className="h-[25px] w-[26px] bg-[#45464b]" icon="size-[18px]" />)}
      <IconButton name="trash" className="ml-[7px] h-[25px] w-[26px] bg-[#45464b]" icon="size-[18px]" />
      <button aria-label="颜色" className="flex h-[25px] w-[26px] items-center justify-center bg-[#45464b]"><span className="size-4 rounded-sm bg-[#cc0a1c]" /></button>
      <button className="h-[25px] w-[26px] bg-[#45464b] text-[13px] text-white">50</button>
      <button aria-label="画笔大小" className="flex h-[25px] w-[26px] items-center justify-center bg-[#45464b]"><span className="size-[5px] rounded-full bg-[#b01226]" /></button>
      <IconButton name="closeo" className="h-[25px] w-[26px] bg-[#45464b]" icon="size-5" />
      <IconButton name="mover" className="h-[25px] w-[26px] bg-[#45464b]" icon="size-5" />
    </div>
    <div className="ml-auto flex h-[23px] w-[514px] items-center bg-[#3a4051] text-white">
      <button className="w-7 font-bold">模型</button>
      <IconButton name="grid" icon="size-[14px]" />
      <IconButton name="snap" className="h-5 w-6" icon="size-[14px]" />
      <Caret className="mx-1 w-[6px]" />
      <IconButton name="ortho" className="h-5 w-6" />
      <IconButton name="polar" />
      <Caret className="mx-1 w-[6px]" />
      <IconButton name="iso" />
      <Caret className="mx-1 w-[6px]" />
      <IconButton name="track" className="ml-[2px] h-[21px] w-5 bg-[#4f80b4]" />
      <IconButton name="osnap" className="ml-[2px] h-[21px] w-5 bg-[#4f80b4]" />
      <Caret className="mx-[6px] w-[6px]" />
      <IconButton name="anno" className="h-[21px] w-5 bg-[#4f80b4]" />
      {['anno', 'anno', 'grid', 'help', 'plus', 'anno', 'tri', 'osnap', 'linetype'].map((n, i) => <IconButton key={i} name={n} className="h-5 w-6" icon="size-[14px]" />)}
    </div>
  </footer>
);

const KeyCap = ({ text, faded }: { text: string; faded?: boolean }) => {
  const wrapped = text.startsWith('<');
  return (
    <kbd className={`flex h-[61px] items-center rounded border-[5px] border-[#1d65b2] bg-[#404040]/90 px-[6px] pb-[6px] font-['Open_Sans','Noto_Sans_CJK_SC',sans-serif] text-[39px] font-light leading-none text-white ${faded ? 'opacity-40' : ''}`}>
      {wrapped && <b className="font-bold">&lt;</b>}
      {text.replace(/[<>]/g, '')}
      {wrapped && <b className="font-bold">&gt;</b>}
    </kbd>
  );
};

const App = () => {
  return (
    <div className="relative flex h-screen flex-col overflow-hidden border-l-2 border-t-2 border-[#9db6c8] bg-[#232a35] font-['Noto_Sans','Noto_Sans_CJK_SC',sans-serif]">
      <TitleBar />
      <Ribbon />
      <FileTabs />
      <StyleBar />
      <StandardBar />
      <div className="flex min-h-0 flex-1 bg-[#404457]">
        <aside className="w-[31px] shrink-0 pr-px pt-1">
          <HGrip />
          <div className="flex h-[412px] flex-col border-b border-[#2f3443]">
            {drawTools.map((n) => <IconButton key={n} name={n} className="w-full flex-1" />)}
          </div>
        </aside>
        <Canvas />
        <aside className="w-8 shrink-0 pl-[2px] pr-1 pt-1">
          <HGrip />
          <div className="flex h-[372px] flex-col">
            {modifyTools.map((n, i) => <IconButton key={i} name={n} className="w-full flex-1" />)}
          </div>
          <div className="flex flex-col border-y border-[#2f3443] pt-1">
            <HGrip />
            {['draw1', 'draw2', 'draw3', 'draw4'].map((n) => <IconButton key={n} name={n} className="h-[21px] w-full" />)}
            <span className="mx-1 my-px h-[2px] bg-gray-200" />
            {['draw5', 'draw6'].map((n) => <IconButton key={n} name={n} className="h-5 w-full" />)}
          </div>
        </aside>
      </div>
      <StatusBar />
      <div className="h-1 shrink-0 bg-[#3c4554]" />

      <div className="pointer-events-none absolute bottom-[11px] left-2 flex items-center gap-2 opacity-40">
        <svg viewBox="0 0 36 36" className="size-9" aria-hidden="true">
          <path fill="#dfe1e6" fillRule="evenodd" d="M6 0h24a6 6 0 0 1 6 6v24a6 6 0 0 1-6 6H6a6 6 0 0 1-6-6V6a6 6 0 0 1 6-6zM9 9c8-4 15-1 19 5-7 3-12 4-17 0zM12 19c7 1 12 3 15 8-6 3-12 0-15-4zM6 16a2 2 0 1 0 0 4 2 2 0 0 0 0-4z" />
        </svg>
        <span className="text-[35px] font-bold leading-9 text-[#dfe1e6]">tafe.cc</span>
      </div>

      <div className="pointer-events-none absolute bottom-[3px] right-[6px] flex flex-col items-end gap-2">
        <KeyCap text="<中键双击>" faded />
        <KeyCap text="<中键>" />
        <KeyCap text="空格键" />
        <KeyCap text="<左键按下>" />
      </div>
    </div>
  );
};

export default App;
